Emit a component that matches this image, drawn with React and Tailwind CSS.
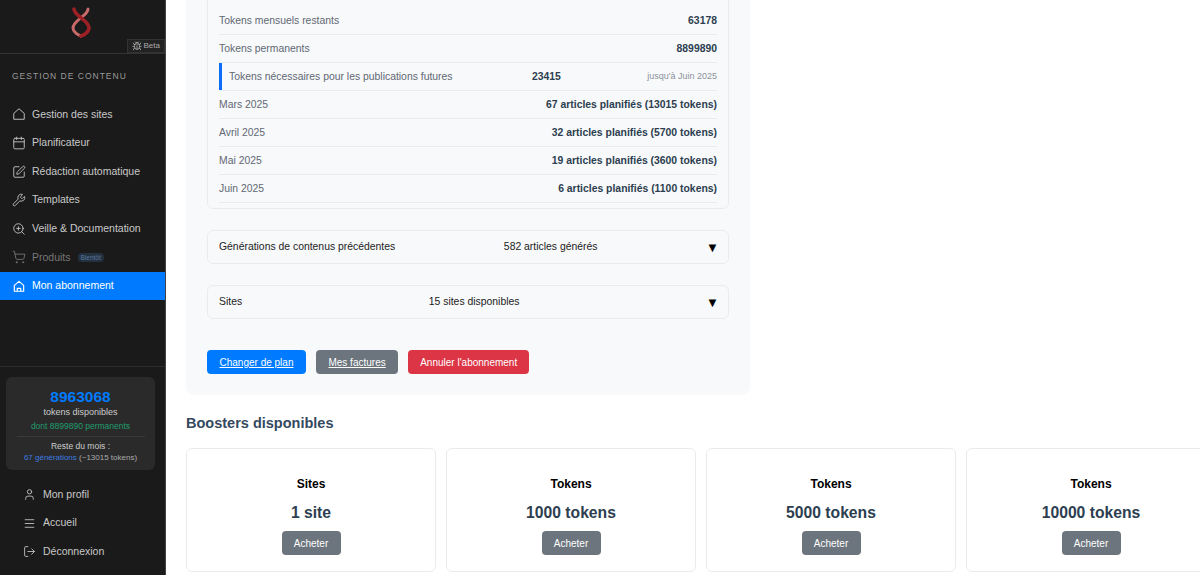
import { Bug, Calendar, LogOut, Menu, ShoppingCart, SquarePen, User, Wrench, ZoomIn } from "lucide-react";

// plain outline house, the picture has no door on it
function PlainHouse({ size }) {
  return (
    <svg width={size} height={size} viewBox="0 0 24 24" fill="none" stroke="currentColor" strokeWidth="1.6" strokeLinejoin="round">
      <path d="M3 11 12 3l9 8v10H3z" />
    </svg>
  );
}

function DoorHouse({ size }) {
  return (
    <svg width={size} height={size} viewBox="0 0 24 24" fill="none" stroke="currentColor" strokeWidth="2" strokeLinejoin="round">
      <path d="M4 11 12 4l8 7v10H4z" />
      <path d="M9 21v-5h6v5" />
    </svg>
  );
}

const navItems = [
  { label: "Gestion des sites", Icon: PlainHouse },
  { label: "Planificateur", Icon: Calendar },
  { label: "Rédaction automatique", Icon: SquarePen },
  { label: "Templates", Icon: Wrench },
  { label: "Veille & Documentation", Icon: ZoomIn },
];

const planRows = [
  { label: "Mars 2025", value: "67 articles planifiés (13015 tokens)" },
  { label: "Avril 2025", value: "32 articles planifiés (5700 tokens)" },
  { label: "Mai 2025", value: "19 articles planifiés (3600 tokens)" },
  { label: "Juin 2025", value: "6 articles planifiés (1100 tokens)" },
];

const boosters = [
  { title: "Sites", amount: "1 site" },
  { title: "Tokens", amount: "1000 tokens" },
  { title: "Tokens", amount: "5000 tokens" },
  { title: "Tokens", amount: "10000 tokens" },
];

function Logo() {
  return (
    <svg width="22" height="32" viewBox="0 0 22 32" fill="none" strokeLinecap="round">
      <path d="M18 2C18 9 3 13 3 21C3 25 8 28 11 29" stroke="#c96a6a" strokeWidth="3" />
      <path d="M4 2C4 9 19 13 19 21C19 25 14 28 11 29" stroke="#9c2026" strokeWidth="3.6" />
    </svg>
  );
}

function Row({ label, value }) {
  return (
    <div className="flex h-[28px] items-center justify-between border-b border-[#e9ecef] text-[10.4px]">
      <span className="text-[#5f6874]">{label}</span>
      <span className="font-bold text-[#2c3e50]">{value}</span>
    </div>
  );
}

function Accordion({ label, info }) {
  return (
    <div className="flex h-[34px] items-center justify-between rounded-md border border-[#e9ecef] px-[11px] text-[10.4px] text-[#222]">
      <span>{label}</span>
      <span>{info}</span>
      <span className="-mr-[2px] text-[13px] leading-none text-black">▼</span>
    </div>
  );
}

export default function App() {
  return (
    <div className="flex h-[575px] w-[1200px] overflow-hidden bg-white font-['Liberation_Sans',Arial,sans-serif]">
      <aside className="flex w-[166px] shrink-0 flex-col border-r border-[#444] bg-[#1a1a1a] text-[#c9c9c9]">
        <div className="relative flex h-[54px] justify-center border-b border-[#333] pr-[4px] pt-[7px]">
          <Logo />
          <div className="absolute bottom-0 right-0 flex h-[14px] items-center gap-[2px] border border-[#333] bg-[#222] px-[4px] text-[8px] text-[#aaa]">
            <Bug size={10} />
            Beta
          </div>
        </div>
        <div className="pl-[12px] pt-[16px] text-[8.5px] tracking-[1px] text-[#999]">GESTION DE CONTENU</div>
        <nav className="mt-[17.4px] flex flex-col">
          {navItems.map(({ label, Icon }) => (
            <div key={label} className="flex h-[28.6px] items-center gap-[6px] pl-[12px] text-[10.5px]">
              <Icon size={14} strokeWidth={1.5} />
              {label}
            </div>
          ))}
          <div className="flex h-[28.6px] items-center gap-[6px] pl-[12px] text-[10.5px] text-[#777]">
            <ShoppingCart size={14} strokeWidth={1.5} />
            Produits
            <span className="ml-[1px] rounded-sm bg-[#23303f] px-[3px] text-[6.5px] text-[#5c7a9c]">Bientôt</span>
          </div>
          <div className="flex h-[28.6px] items-center gap-[6px] bg-[#007bff] pl-[12px] text-[10.5px] text-white">
            <DoorHouse size={14} />
            Mon abonnement
          </div>
        </nav>
        <div className="mt-auto border-t border-[#2c2c2c] pb-[9px] pl-[6px] pr-[10px] pt-[10px]">
          <div className="flex h-[93px] flex-col items-center rounded-md bg-[#2a2a2a] pt-[11px] text-center">
            <div className="text-[15.5px] font-bold leading-[18px] text-[#007bff]">8963068</div>
            <div className="text-[9px] leading-[12px] text-[#ccc]">tokens disponibles</div>
            <div className="mt-[2px] text-[8.5px] leading-[12px] text-[#1f9d6e]">dont 8899890 permanents</div>
            <div className="mt-[4px] w-[128px] border-t border-[#3a3a3a] pt-[4px] text-[8.5px] leading-[11px] text-[#ccc]">Reste du mois :</div>
            <div className="text-[8px] leading-[11px] text-[#aaa]">
              <span className="text-[#3d7be0]">67 générations</span> (~13015 tokens)
            </div>
          </div>
          <div className="mt-[10px] flex flex-col pl-[17px] text-[10.5px]">
            {[
              ["Mon profil", User],
              ["Accueil", Menu],
              ["Déconnexion", LogOut],
            ].map(([label, Icon]) => (
              <div key={label} className="flex h-[28.6px] items-center gap-[7px]">
                <Icon size={13} strokeWidth={1.6} />
                {label}
              </div>
            ))}
          </div>
        </div>
      </aside>

      <main className="min-w-0 flex-1 overflow-hidden pl-[20px]">
        <div className="-mt-[20px] w-[564px] rounded-lg bg-[#f8f9fa] px-[21px] pb-[21px]">
          <div className="rounded-md border border-[#e9ecef] px-[11px] pb-[5px] pt-[26px]">
            <Row label="Tokens mensuels restants" value="63178" />
            <Row label="Tokens permanents" value="8899890" />
            <div className="flex h-[28px] items-center justify-between border-b border-[#e9ecef] text-[10.4px]">
              <span className="flex h-full items-center border-l-[3px] border-[#0d6efd] pl-[7px] text-[#5f6874]">
                Tokens nécessaires pour les publications futures
              </span>
              <span className="pr-[7px] font-bold text-[#2c3e50]">23415</span>
              <span className="text-[9px] text-[#8a929a]">jusqu'à Juin 2025</span>
            </div>
            {planRows.map((row) => (
              <Row key={row.label} label={row.label} value={row.value} />
            ))}
          </div>
          <div className="mt-[21px] flex flex-col gap-[21px]">
            <Accordion label="Générations de contenus précédentes" info="582 articles générés" />
            <Accordion label="Sites" info="15 sites disponibles" />
          </div>
          <div className="mt-[31px] flex gap-[10px] text-[10px] text-white">
            <a className="flex h-[24px] items-center rounded bg-[#007bff] px-[12.5px] underline">Changer de plan</a>
            <a className="flex h-[24px] items-center rounded bg-[#6c757d] px-[12.5px] underline">Mes factures</a>
            <button className="flex h-[24px] items-center rounded bg-[#dc3545] px-[12px]">Annuler l'abonnement</button>
          </div>
        </div>
        <h2 className="mt-[19px] text-[14.5px] font-bold leading-[18px] text-[#34495e]">Boosters disponibles</h2>
        <div className="mt-[16px] flex gap-[10px]">
          {boosters.map((b) => (
            <div key={b.amount} className="flex h-[124px] w-[250px] shrink-0 flex-col items-center rounded-md border border-[#e9ecef] bg-white pt-[27px]">
              <div className="text-[12px] font-bold leading-[16px] text-black">{b.title}</div>
              <div className="mt-[11px] text-[15.7px] font-bold leading-[20px] text-[#2c3e50]">{b.amount}</div>
              <button className="mt-[8px] flex h-[24px] w-[59px] items-center justify-center rounded bg-[#6c757d] text-[10px] text-white">Acheter</button>
            </div>
          ))}
        </div>
      </main>
    </div>
  );
}
